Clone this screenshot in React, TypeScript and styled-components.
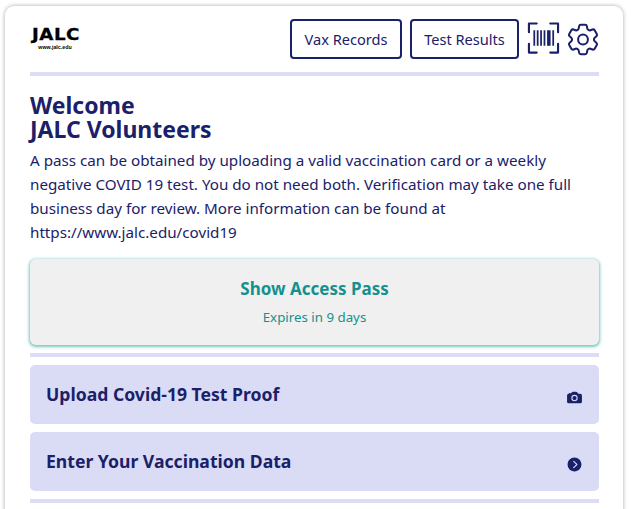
import React from "react";
import styled, { createGlobalStyle } from "styled-components";
import { IoCamera, IoChevronForwardCircle } from "react-icons/io5";

const NAVY = "#1a2169";

const Global = createGlobalStyle`
  html, body { margin: 0; padding: 0; background: #fff; }
  body { font-family: "Noto Sans", "Open Sans", sans-serif; color: ${NAVY}; }
`;

const BarcodeIcon = () => (
  <svg width="34" height="34" viewBox="0 1 34 34" fill="none" stroke={NAVY} strokeWidth="2.2">
    <path d="M10 2H2v9M24 2h8v9M10 32H2v-9M24 32h8v-9" strokeLinecap="round" strokeLinejoin="round" />
    <path d="M7.5 9v16M11 9v16M14.5 9v16M18 9v16M27 9v16" strokeWidth="1.8" />
    <path d="M22.5 9v16" strokeWidth="3.6" />
  </svg>
);

const GearIcon = () => (
  <svg width="33" height="33" viewBox="2.2 2.2 19.6 19.6" fill="none" stroke={NAVY} strokeWidth="1.25" strokeLinecap="round" strokeLinejoin="round">
    <path d="M9.594 3.94c.09-.542.56-.94 1.11-.94h2.593c.55 0 1.02.398 1.11.94l.213 1.281c.063.374.313.686.645.87.074.04.147.083.22.127.325.196.72.257 1.075.124l1.217-.456a1.125 1.125 0 0 1 1.37.49l1.296 2.247a1.125 1.125 0 0 1-.26 1.431l-1.003.827c-.293.241-.438.613-.43.992a7.723 7.723 0 0 1 0 .255c-.008.378.137.75.43.991l1.004.827c.424.35.534.955.26 1.43l-1.298 2.247a1.125 1.125 0 0 1-1.369.491l-1.217-.456c-.355-.133-.75-.072-1.076.124a6.47 6.47 0 0 1-.22.128c-.331.183-.581.495-.644.869l-.213 1.281c-.09.543-.56.94-1.11.94h-2.594c-.55 0-1.019-.398-1.11-.94l-.213-1.281c-.062-.374-.312-.686-.644-.87a6.52 6.52 0 0 1-.22-.127c-.325-.196-.72-.257-1.076-.124l-1.217.456a1.125 1.125 0 0 1-1.369-.49l-1.297-2.247a1.125 1.125 0 0 1 .26-1.431l1.004-.827c.292-.24.437-.613.43-.991a6.932 6.932 0 0 1 0-.255c.007-.38-.138-.751-.43-.992l-1.004-.827a1.125 1.125 0 0 1-.26-1.43l1.297-2.247a1.125 1.125 0 0 1 1.37-.491l1.216.456c.356.133.751.072 1.076-.124.072-.044.146-.086.22-.128.332-.183.582-.495.644-.869l.214-1.28Z" />
    <path d="M15 12a3 3 0 1 1-6 0 3 3 0 0 1 6 0Z" />
  </svg>
);

const Page = styled.div`
  box-sizing: border-box;
  height: 509px;
  padding: 6px 8px 0 5px;
  overflow: hidden;
`;

const Card = styled.main`
  box-sizing: border-box;
  height: 530px;
  padding: 13px 24px 0 25px;
  background: #fff;
  border-radius: 9px;
  box-shadow: 0 0 4px rgba(0, 0, 0, 0.35);
`;

const Header = styled.header`
  display: flex;
  align-items: center;
  justify-content: space-between;
  height: 40px;
`;

const Logo = styled.div`
  display: flex;
  flex-direction: column;
  align-items: center;
  width: 50px;
  margin-bottom: 3px;
  color: #000;
`;

const LogoName = styled.span`
  font-family: "DejaVu Sans", sans-serif;
  font-size: 16px;
  font-weight: 700;
  letter-spacing: 0.4px;
  margin-left: 2px;
  transform: scaleX(1.14);
  -webkit-text-stroke: 0.3px #000;
`;

const LogoUrl = styled.span`
  font-family: "Liberation Sans", sans-serif;
  font-size: 5.3px;
  font-weight: 700;
`;

const Actions = styled.nav`
  display: flex;
  align-items: center;
  gap: 8px;
`;

const OutlineButton = styled.button<{ $width: number }>`
  box-sizing: border-box;
  width: ${(p) => p.$width}px;
  height: 40px;
  padding: 0;
  font: 400 14.6px "Noto Sans", sans-serif;
  color: ${NAVY};
  background: #fff;
  border: 2px solid ${NAVY};
  border-radius: 4px;
`;

const IconSlot = styled.span<{ $width: number; $pull?: number }>`
  display: flex;
  width: ${(p) => p.$width}px;
  height: 34px;
  margin-left: ${(p) => p.$pull ?? 0}px;
  align-items: center;
  justify-content: center;
`;

const Divider = styled.hr<{ $top: number }>`
  height: 4px;
  margin: ${(p) => p.$top}px 0 8px;
  background: #dcdcf6;
  border: 0;
`;

const Title = styled.h1`
  margin: 17px 0 0;
  font-size: 23px;
  font-weight: 700;
  line-height: 24px;
`;

const Intro = styled.p`
  margin: 7px 0 15px;
  font-size: 15.2px;
  line-height: 24px;
`;

const PassButton = styled.button`
  box-sizing: border-box;
  display: flex;
  flex-direction: column;
  align-items: center;
  width: 100%;
  height: 86px;
  padding: 18px 0 0;
  font-family: "Noto Sans", sans-serif;
  color: #16908f;
  background: #f0f0f0;
  border: 0;
  border-radius: 6px;
  box-shadow: 0 1px 3px 1px rgba(32, 160, 155, 0.6);
`;

const PassTitle = styled.span`
  font-size: 17px;
  font-weight: 700;
  line-height: 24px;
`;

const PassNote = styled.span`
  margin-top: 7px;
  font-size: 13.3px;
  line-height: 18px;
`;

const ActionRow = styled.div`
  box-sizing: border-box;
  display: flex;
  align-items: center;
  justify-content: space-between;
  height: 59px;
  margin-bottom: 8px;
  padding: 0 16px 1px;
  background: #dadcf6;
  border-radius: 5px;
`;

const RowLabel = styled.span`
  font-size: 17.6px;
  font-weight: 700;
  line-height: 24px;
`;

const RowIcon = styled.span`
  display: flex;
  margin: 6px 0 0 0;
  font-size: 17px;
  color: ${NAVY};
`;

export default function App() {
  return (
    <Page>
      <Global />
      <Card>
        <Header>
          <Logo>
            <LogoName>JALC</LogoName>
            <LogoUrl>www.jalc.edu</LogoUrl>
          </Logo>
          <Actions>
            <OutlineButton $width={112}>Vax Records</OutlineButton>
            <OutlineButton $width={109}>Test Results</OutlineButton>
            <IconSlot $width={33}>
              <BarcodeIcon />
            </IconSlot>
            <IconSlot $width={32} $pull={-1}>
              <GearIcon />
            </IconSlot>
          </Actions>
        </Header>
        <Divider $top={13} />
        <Title>
          Welcome
          <br />
          JALC Volunteers
        </Title>
        <Intro>
          A pass can be obtained by uploading a valid vaccination card or a weekly negative COVID 19 test. You do not
          need both. Verification may take one full business day for review. More information can be found at
          https://www.jalc.edu/covid19
        </Intro>
        <PassButton>
          <PassTitle>Show Access Pass</PassTitle>
          <PassNote>Expires in 9 days</PassNote>
        </PassButton>
        <Divider $top={8} />
        <ActionRow>
          <RowLabel>Upload Covid-19 Test Proof</RowLabel>
          <RowIcon>
            <IoCamera />
          </RowIcon>
        </ActionRow>
        <ActionRow>
          <RowLabel>Enter Your Vaccination Data</RowLabel>
          <RowIcon>
            <IoChevronForwardCircle />
          </RowIcon>
        </ActionRow>
        <Divider $top={8} />
      </Card>
    </Page>
  );
}
